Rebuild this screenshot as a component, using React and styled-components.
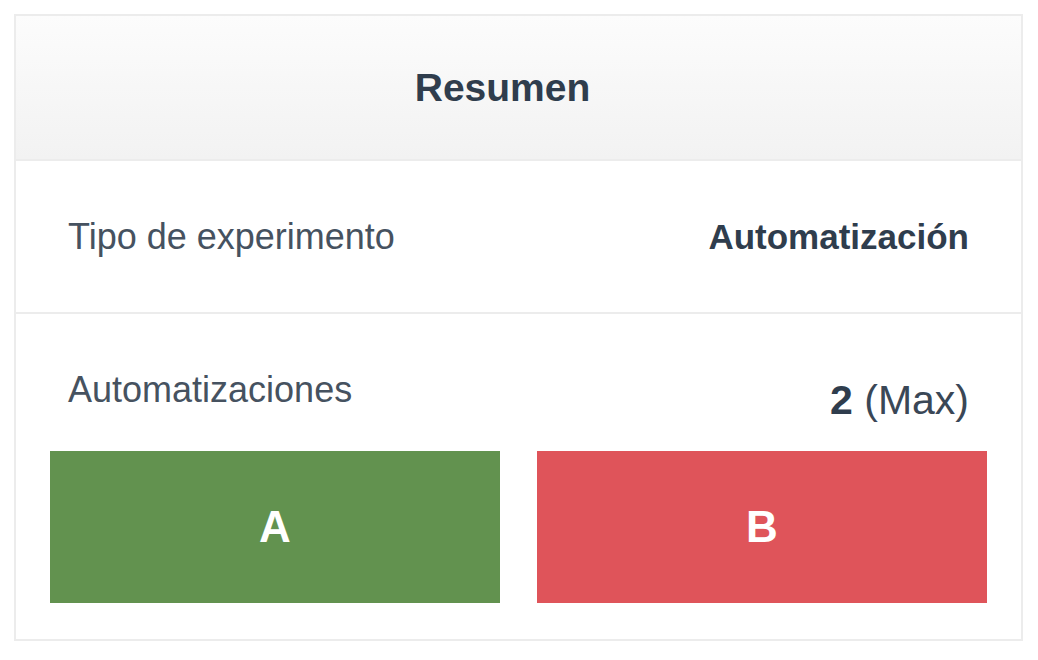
import styled, { createGlobalStyle } from "styled-components";

const GlobalStyle = createGlobalStyle`
  body {
    margin: 0;
    background: #ffffff;
    font-family: "Liberation Sans", Arial, sans-serif;
  }
`;

const Page = styled.div`
  padding: 14px 0 0 14px;
`;

const Card = styled.div`
  width: 1005px;
  border: 2px solid #ececec;
  background: #ffffff;
  display: flex;
  flex-direction: column;
`;

const Header = styled.div`
  height: 143px;
  padding-right: 32px;
  display: flex;
  align-items: center;
  justify-content: center;
  background: linear-gradient(#fcfcfc, #f2f2f2);
  border-bottom: 2px solid #ececec;
  h2 {
    margin: 0;
    font-size: 39px;
    font-weight: 700;
    color: #2f3d4d;
  }
`;

const Row = styled.div`
  height: 151px;
  padding: 0 52px;
  display: flex;
  align-items: center;
  justify-content: space-between;
  border-bottom: 2px solid #ececec;
`;

const Label = styled.span`
  font-size: 36px;
  line-height: 40px;
  color: #465260;
`;

const Value = styled.span`
  font-size: ${(p) => p.size || 35}px;
  line-height: 44px;
  color: #3a4756;
  b {
    font-weight: 700;
    color: #2f3d4d;
  }
`;

const Section = styled.div`
  padding: 0 34px 36px;
`;

const InfoLine = styled.div`
  height: 137px;
  padding: 0 18px;
  display: flex;
  justify-content: space-between;
  align-items: flex-start;
  ${Label} {
    margin-top: 56px;
  }
  ${Value} {
    margin-top: 64px;
  }
`;

const Choices = styled.div`
  display: grid;
  grid-template-columns: 1fr 1fr;
  gap: 37px;
`;

const Choice = styled.div`
  height: 152px;
  display: flex;
  align-items: center;
  justify-content: center;
  background: ${(p) => p.color};
  color: #ffffff;
  font-size: 44px;
  font-weight: 700;
`;

export default function App() {
  return (
    <>
      <GlobalStyle />
      <Page>
        <Card>
          <Header>
            <h2>Resumen</h2>
          </Header>
          <Row>
            <Label>Tipo de experimento</Label>
            <Value>
              <b>Automatización</b>
            </Value>
          </Row>
          <Section>
            <InfoLine>
              <Label>Automatizaciones</Label>
              <Value size={41}>
                <b>2</b> (Max)
              </Value>
            </InfoLine>
            <Choices>
              <Choice color="#62924f">A</Choice>
              <Choice color="#df545a">B</Choice>
            </Choices>
          </Section>
        </Card>
      </Page>
    </>
  );
}
